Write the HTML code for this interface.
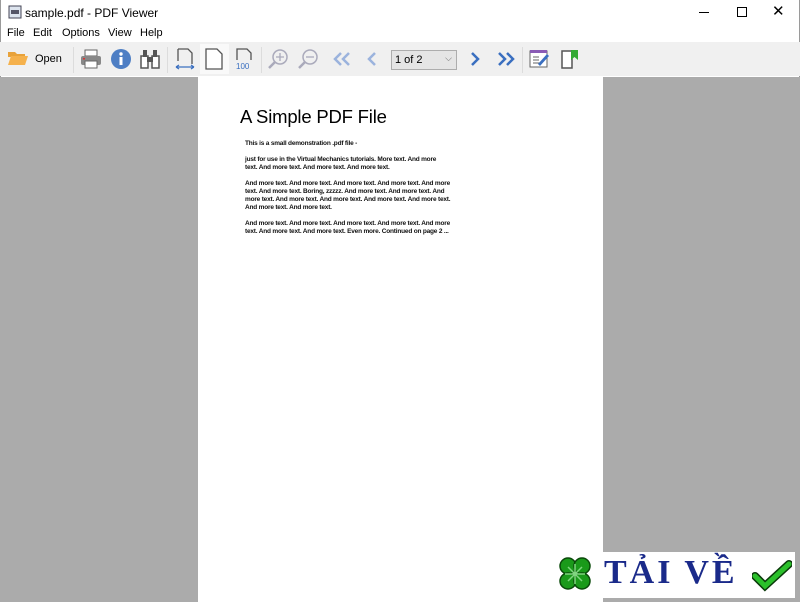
<!DOCTYPE html>
<html><head><style>
*{margin:0;padding:0;box-sizing:border-box}
body{width:800px;height:602px;overflow:hidden;font-family:"Liberation Sans",sans-serif;background:#fff;position:relative}
.abs{position:absolute}
.menu span{position:absolute;top:27px;font-size:11px;color:#000}
.tb{top:42px;left:0;width:800px;height:34px;background:#f0f0f0}
.sep{position:absolute;top:47px;width:1px;height:26px;background:#dcdcdc}
.pg p{font-size:6.5px;line-height:8px;color:#111;font-weight:bold;letter-spacing:-0.2px}
</style></head><body>
<div class="abs" style="left:0;top:0;width:800px;height:602px;border:1px solid #9a9a9a;border-top:none"></div>
<svg class="abs" style="left:8px;top:5px" width="14" height="14"><rect x="1" y="1" width="12" height="12" fill="#dde4ee" stroke="#445"/><rect x="3" y="5" width="8" height="4" fill="#556"/></svg>
<div class="abs" style="left:25px;top:6px;font-size:12px">sample.pdf - PDF Viewer</div>
<div class="abs" style="left:699px;top:12px;width:10px;height:1px;background:#000"></div>
<div class="abs" style="left:737px;top:7px;width:10px;height:10px;border:1px solid #000"></div>
<div class="abs" style="left:772px;top:2px;font-size:15px">✕</div>
<div class="menu"><span style="left:7px">File</span><span style="left:33px">Edit</span><span style="left:62px">Options</span><span style="left:108px">View</span><span style="left:140px">Help</span></div>
<div class="abs tb"></div>
<svg class="abs" style="left:7px;top:49px" width="22" height="18"><path d="M1 3h7l2 2h8v3H1z" fill="#e8a23a"/><path d="M1 16l3-9h17l-3 9z" fill="#f5b14c"/></svg>
<div class="abs" style="left:35px;top:53px;font-size:11px">Open</div>
<div class="sep" style="left:73px"></div>
<svg class="abs" style="left:80px;top:48px" width="22" height="22"><rect x="5" y="2" width="12" height="6" fill="#fff" stroke="#666"/><rect x="1" y="8" width="20" height="9" rx="2" fill="#888"/><rect x="5" y="13" width="12" height="7" fill="#fff" stroke="#666"/><rect x="3" y="10" width="2" height="1.5" fill="#d33"/></svg>
<svg class="abs" style="left:110px;top:48px" width="22" height="22"><circle cx="11" cy="11" r="10" fill="#4d7ec4"/><rect x="9.5" y="9" width="3" height="8" fill="#fff"/><circle cx="11" cy="6" r="1.7" fill="#fff"/></svg>
<svg class="abs" style="left:139px;top:48px" width="22" height="22"><rect x="2" y="8" width="7" height="12" fill="#fff" stroke="#555" stroke-width="1.5"/><rect x="13" y="8" width="7" height="12" fill="#fff" stroke="#555" stroke-width="1.5"/><rect x="4" y="2" width="4" height="7" fill="#555"/><rect x="14" y="2" width="4" height="7" fill="#555"/><rect x="8" y="9" width="6" height="5" fill="#555"/></svg>
<div class="sep" style="left:167px"></div>
<svg class="abs" style="left:174px;top:47px" width="22" height="24"><path d="M4 2h10l4 4v11" fill="none" stroke="#555" stroke-width="1.3"/><path d="M4 2v12" stroke="#555" stroke-width="1.3"/><path d="M2 20h18M2 20l3-2M2 20l3 2M20 20l-3-2M20 20l-3 2" stroke="#3a6fc0" stroke-width="1.3" fill="none"/></svg>
<div class="abs" style="left:200px;top:44px;width:29px;height:30px;background:#f9f9f9"></div>
<svg class="abs" style="left:204px;top:48px" width="20" height="22"><path d="M2 1h11l5 5v15H2z" fill="#fff" stroke="#555" stroke-width="1.3"/></svg>
<svg class="abs" style="left:233px;top:47px" width="22" height="24"><path d="M4 13V2h10l4 4v7" fill="none" stroke="#555" stroke-width="1.3"/><text x="3" y="22" font-size="8" fill="#3a6fc0" font-family="Liberation Sans">100</text></svg>
<div class="sep" style="left:261px"></div>
<svg class="abs" style="left:267px;top:48px" width="22" height="22" fill="none" stroke="#aab"><circle cx="13" cy="9" r="7" stroke-width="1.5"/><path d="M8 14l-6 6" stroke-width="2.5"/><path d="M13 5v8M9 9h8" stroke-width="1.3"/></svg>
<svg class="abs" style="left:297px;top:48px" width="22" height="22" fill="none" stroke="#aab"><circle cx="13" cy="9" r="7" stroke-width="1.5"/><path d="M8 14l-6 6" stroke-width="2.5"/><path d="M9 9h8" stroke-width="1.3"/></svg>
<svg class="abs" style="left:332px;top:50px" width="20" height="18" fill="none" stroke="#9bb3dd" stroke-width="2.5"><path d="M9 3L3 9l6 6M17 3l-6 6 6 6"/></svg>
<svg class="abs" style="left:365px;top:50px" width="14" height="18" fill="none" stroke="#9bb3dd" stroke-width="2.5"><path d="M10 3L4 9l6 6"/></svg>
<div class="abs" style="left:391px;top:50px;width:66px;height:20px;background:#e5e5e5;border:1px solid #adadad;font-size:11px;padding:3px 0 0 3px">1 of 2<span style="position:absolute;right:4px;top:2px;font-size:9px;color:#666">⌵</span></div>
<svg class="abs" style="left:468px;top:50px" width="14" height="18" fill="none" stroke="#3a6fc0" stroke-width="2.5"><path d="M4 3l6 6-6 6"/></svg>
<svg class="abs" style="left:496px;top:50px" width="20" height="18" fill="none" stroke="#3a6fc0" stroke-width="2.5"><path d="M3 3l6 6-6 6M11 3l6 6-6 6"/></svg>
<div class="sep" style="left:522px"></div>
<svg class="abs" style="left:529px;top:48px" width="22" height="22"><rect x="1" y="3" width="17" height="16" fill="#fff" stroke="#666"/><rect x="1" y="2" width="17" height="3" fill="#8a5bb5"/><path d="M4 9h6M4 12h6M4 15h8" stroke="#666"/><path d="M9 16l9-10 2 2-9 10z" fill="#3a6fc0"/></svg>
<svg class="abs" style="left:560px;top:48px" width="20" height="22"><path d="M2 3h10v17H2z" fill="#fff" stroke="#555" stroke-width="1.5"/><path d="M11 2h7v10l-3.5-3L11 12z" fill="#33aa33"/></svg>
<div class="abs" style="left:0;top:77px;width:800px;height:525px;background:#ababab"></div>
<div class="abs" style="left:198px;top:77px;width:405px;height:525px;background:#fff"></div>
<div class="abs pg" style="left:240px;top:106px;width:230px">
<div style="font-size:18.5px;color:#000;margin-bottom:12px;letter-spacing:-0.2px">A Simple PDF File</div>
<p style="margin-left:5px;margin-bottom:8px">This is a small demonstration .pdf file -</p>
<p style="margin-left:5px;margin-bottom:8px">just for use in the Virtual Mechanics tutorials. More text. And more<br>text. And more text. And more text. And more text.</p>
<p style="margin-left:5px;margin-bottom:8px">And more text. And more text. And more text. And more text. And more<br>text. And more text. Boring, zzzzz. And more text. And more text. And<br>more text. And more text. And more text. And more text. And more text.<br>And more text. And more text.</p>
<p style="margin-left:5px">And more text. And more text. And more text. And more text. And more<br>text. And more text. And more text. Even more. Continued on page 2 ...</p>
</div>
<div class="abs" style="left:603px;top:552px;width:192px;height:46px;background:#fff"></div>
<svg class="abs" style="left:555px;top:554px" width="40" height="40"><g fill="#1a9a1a" stroke="#0a4a0a" stroke-width="1.5"><circle cx="13" cy="12" r="8"/><circle cx="27" cy="12" r="8"/><circle cx="13" cy="27" r="8"/><circle cx="27" cy="27" r="8"/></g><path d="M20 10v20M10 20h20M13 13l14 14M27 13L13 27" stroke="#7fd67f" stroke-width="1.5"/></svg>
<div class="abs" style="left:604px;top:554px;font-family:'Liberation Serif',serif;font-weight:bold;font-size:34px;color:#1a2a8a;letter-spacing:3px">TẢI VỀ</div>
<svg class="abs" style="left:752px;top:560px" width="40" height="32"><path d="M3 16l10 10L37 4" fill="none" stroke="#0a3a0a" stroke-width="8" stroke-linecap="round"/><path d="M3 16l10 10L37 4" fill="none" stroke="#2bc02b" stroke-width="5" stroke-linecap="round"/></svg>
</body></html>
